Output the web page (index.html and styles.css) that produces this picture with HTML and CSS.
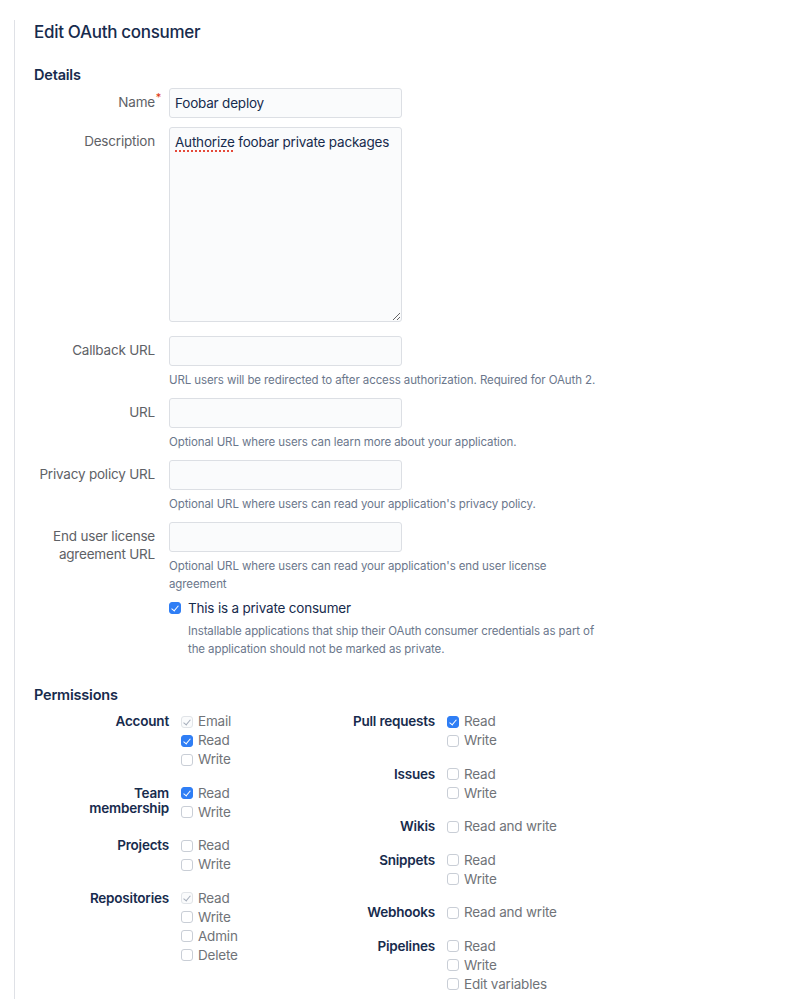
FILE: index.html
```html
<!DOCTYPE html>
<html lang="en">

<head>
    <meta charset="UTF-8">
    <meta name="viewport" content="width=device-width, initial-scale=1.0">
    <title>Edit OAuth consumer</title>
    <link rel="stylesheet" href="styles.css">
</head>

<body>

    <div class="panel">
        <h1 class="page-title">Edit OAuth consumer</h1>

        <!-- Details -->
        <h2 class="section-title">Details</h2>
        <form class="details-form">
            <div class="field">
                <label class="field-label" for="name">Name<span class="required">*</span></label>
                <div class="field-body">
                    <input class="text-input" type="text" id="name" value="Foobar deploy">
                </div>
            </div>

            <div class="field field-tall">
                <label class="field-label" for="description">Description</label>
                <div class="field-body">
                    <div class="text-area" id="description"><span class="misspelled">Authorize</span> foobar private packages</div>
                </div>
            </div>

            <div class="field">
                <label class="field-label" for="callback">Callback URL</label>
                <div class="field-body">
                    <input class="text-input" type="text" id="callback">
                    <p class="help">URL users will be redirected to after access authorization. Required for OAuth 2.</p>
                </div>
            </div>

            <div class="field">
                <label class="field-label" for="url">URL</label>
                <div class="field-body">
                    <input class="text-input" type="text" id="url">
                    <p class="help">Optional URL where users can learn more about your application.</p>
                </div>
            </div>

            <div class="field">
                <label class="field-label" for="privacy">Privacy policy URL</label>
                <div class="field-body">
                    <input class="text-input" type="text" id="privacy">
                    <p class="help">Optional URL where users can read your application's privacy policy.</p>
                </div>
            </div>

            <div class="field">
                <label class="field-label" for="eula">End user license agreement URL</label>
                <div class="field-body">
                    <input class="text-input" type="text" id="eula">
                    <p class="help help-narrow">Optional URL where users can read your application's end user license agreement</p>

                    <label class="private-check">
                        <input type="checkbox" class="box" checked>
                        <span>This is a private consumer</span>
                    </label>
                    <p class="help help-indent">Installable applications that ship their OAuth consumer credentials as part of the application should not be marked as private.</p>
                </div>
            </div>
        </form>

        <!-- Permissions -->
        <h2 class="section-title perms-title">Permissions</h2>
        <div class="perms">
            <div class="perms-col">
                <div class="perm-group">
                    <div class="perm-name">Account</div>
                    <div class="perm-opts">
                        <label class="opt"><input type="checkbox" class="box" checked disabled> Email</label>
                        <label class="opt"><input type="checkbox" class="box" checked> Read</label>
                        <label class="opt"><input type="checkbox" class="box"> Write</label>
                    </div>
                </div>
                <div class="perm-group">
                    <div class="perm-name">Team membership</div>
                    <div class="perm-opts">
                        <label class="opt"><input type="checkbox" class="box" checked> Read</label>
                        <label class="opt"><input type="checkbox" class="box"> Write</label>
                    </div>
                </div>
                <div class="perm-group">
                    <div class="perm-name">Projects</div>
                    <div class="perm-opts">
                        <label class="opt"><input type="checkbox" class="box"> Read</label>
                        <label class="opt"><input type="checkbox" class="box"> Write</label>
                    </div>
                </div>
                <div class="perm-group">
                    <div class="perm-name">Repositories</div>
                    <div class="perm-opts">
                        <label class="opt"><input type="checkbox" class="box" checked disabled> Read</label>
                        <label class="opt"><input type="checkbox" class="box"> Write</label>
                        <label class="opt"><input type="checkbox" class="box"> Admin</label>
                        <label class="opt"><input type="checkbox" class="box"> Delete</label>
                    </div>
                </div>
            </div>

            <div class="perms-col">
                <div class="perm-group">
                    <div class="perm-name">Pull requests</div>
                    <div class="perm-opts">
                        <label class="opt"><input type="checkbox" class="box" checked> Read</label>
                        <label class="opt"><input type="checkbox" class="box"> Write</label>
                    </div>
                </div>
                <div class="perm-group">
                    <div class="perm-name">Issues</div>
                    <div class="perm-opts">
                        <label class="opt"><input type="checkbox" class="box"> Read</label>
                        <label class="opt"><input type="checkbox" class="box"> Write</label>
                    </div>
                </div>
                <div class="perm-group">
                    <div class="perm-name">Wikis</div>
                    <div class="perm-opts">
                        <label class="opt"><input type="checkbox" class="box"> Read and write</label>
                    </div>
                </div>
                <div class="perm-group">
                    <div class="perm-name">Snippets</div>
                    <div class="perm-opts">
                        <label class="opt"><input type="checkbox" class="box"> Read</label>
                        <label class="opt"><input type="checkbox" class="box"> Write</label>
                    </div>
                </div>
                <div class="perm-group">
                    <div class="perm-name">Webhooks</div>
                    <div class="perm-opts">
                        <label class="opt"><input type="checkbox" class="box"> Read and write</label>
                    </div>
                </div>
                <div class="perm-group">
                    <div class="perm-name">Pipelines</div>
                    <div class="perm-opts">
                        <label class="opt"><input type="checkbox" class="box"> Read</label>
                        <label class="opt"><input type="checkbox" class="box"> Write</label>
                        <label class="opt"><input type="checkbox" class="box"> Edit variables</label>
                    </div>
                </div>
            </div>
        </div>
    </div>

</body>

</html>
```

FILE: styles.css
```css
/* Reset */
* {
    box-sizing: border-box;
    margin: 0;
    padding: 0;
}

body {
    font-family: 'Inter', 'Noto Sans', sans-serif;
    font-size: 13.5px;
    letter-spacing: -0.2px;
    color: #172b4d;
    background: #fff;
    padding: 20px 0 0 14px;
}

/* Page panel with the grey rule on the left */
.panel {
    border-left: 1px solid #dfe1e6;
    padding-left: 19px;
    min-height: 980px;
}

.page-title {
    font-size: 17px;
    font-weight: 500;
    line-height: 24px;
    letter-spacing: -0.3px;
    margin-bottom: 21px;
}

.section-title {
    font-size: 14.5px;
    font-weight: 600;
    line-height: 20px;
    margin-bottom: 3px;
}

/* Details form */
.field {
    display: grid;
    grid-template-columns: 121px 233px;
    column-gap: 14px;
    margin-bottom: 9px;
}

.field-tall {
    margin-bottom: 14px;
}

.field-label {
    position: relative;
    text-align: right;
    color: #5e6166;
    line-height: 18px;
    padding-top: 5px;
}

.required {
    position: absolute;
    right: -6px;
    top: 0;
    color: #de350b;
    font-size: 11px;
}

.field-body {
    min-width: 0;
}

.text-input,
.text-area {
    display: block;
    width: 233px;
    height: 30px;
    padding: 0 5px;
    border: 1px solid #dcdfe4;
    border-radius: 3px;
    background: #fafbfc;
    font-family: inherit;
    font-size: 13.5px;
    letter-spacing: -0.2px;
    color: #172b4d;
}

.text-area {
    height: 195px;
    padding: 5px;
    line-height: 18px;
    resize: vertical;
    overflow: auto;
}

.misspelled {
    text-decoration: underline dotted #e5493a;
    text-decoration-thickness: 2px;
    text-underline-offset: 3px;
}

.help {
    width: 440px;
    margin-top: 5px;
    font-size: 11.5px;
    letter-spacing: -0.1px;
    line-height: 18px;
    color: #6b778c;
}

.help-narrow {
    width: 390px;
}

.help-indent {
    width: 430px;
    margin-top: 4px;
    padding-left: 19px;
}

/* Checkboxes */
.box {
    appearance: none;
    -webkit-appearance: none;
    position: relative;
    flex: none;
    width: 12px;
    height: 12px;
    border: 1px solid #c9ced6;
    border-radius: 3px;
    background: #fff;
    margin: 0 5px 0 0;
}

.box:checked {
    background: #2f7ef5;
    border-color: #2f7ef5;
}

.box:checked::after {
    content: "";
    position: absolute;
    left: 3px;
    top: 1px;
    width: 3px;
    height: 6px;
    border: solid #fff;
    border-width: 0 1.5px 1.5px 0;
    transform: rotate(40deg);
}

.box:disabled {
    background: #fafbfc;
    border-color: #e1e4e8;
}

.box:disabled::after {
    border-color: #a5adba;
    border-width: 0 1px 1px 0;
}

.private-check {
    display: flex;
    align-items: center;
    margin-top: 5px;
    line-height: 20px;
    color: #172b4d;
}

.private-check .box {
    margin-right: 7px;
}

/* Permissions */
.perms-title {
    margin-top: 27px;
    margin-bottom: 7px;
}

.perms {
    display: grid;
    grid-template-columns: 266px 266px;
}

.perm-group {
    display: grid;
    grid-template-columns: 135px 1fr;
    column-gap: 12px;
    margin-bottom: 14.5px;
}

.perm-name {
    text-align: right;
    font-weight: 600;
    line-height: 15px;
    padding-top: 2px;
    padding-left: 40px;
}

.opt {
    display: flex;
    align-items: center;
    line-height: 19px;
    color: #707378;
}
```
